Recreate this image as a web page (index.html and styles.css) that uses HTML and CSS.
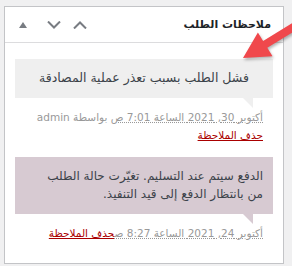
FILE: index.html
```html
<!DOCTYPE html>
<html lang="ar" dir="rtl">
<head>
  <meta charset="UTF-8">
  <title>ملاحظات الطلب</title>
  <link rel="stylesheet" href="styles.css">
</head>
<body>
  <div class="postbox">
    <div class="postbox-header">
      <h2>ملاحظات الطلب</h2>
      <div class="handle-actions">
        <button class="handle-btn" aria-label="نقل لأعلى">
          <svg width="14" height="8" viewBox="0 0 14 8"><polyline points="1,7.5 7,1.5 13,7.5" /></svg>
        </button>
        <button class="handle-btn" aria-label="نقل لأسفل">
          <svg width="14" height="8" viewBox="0 0 14 8"><polyline points="1,0.5 7,6.5 13,0.5" /></svg>
        </button>
        <button class="handle-btn toggle" aria-label="تبديل">
          <svg width="8" height="6" viewBox="0 0 8 6"><polygon points="0,6 4,0 8,6" /></svg>
        </button>
      </div>
    </div>

    <ul class="order-notes">
      <li class="note system-note">
        <div class="note-content">
          <p class="centered">فشل الطلب بسبب تعذر عملية المصادقة</p>
        </div>
        <p class="meta">
          <abbr class="exact-date">أكتوبر 30, 2021 الساعة 7:01 ص</abbr> بواسطة admin
          <br><a href="#" class="delete-note">حذف الملاحظة</a>
        </p>
      </li>
      <li class="note customer-note">
        <div class="note-content">
          <p>الدفع سيتم عند التسليم. تغيّرت حالة الطلب<br>من بانتظار الدفع إلى قيد التنفيذ.</p>
        </div>
        <p class="meta">
          <abbr class="exact-date">أكتوبر 24, 2021 الساعة 8:27 ص</abbr><a href="#" class="delete-note">حذف الملاحظة</a>
        </p>
      </li>
    </ul>
  </div>

  <!-- red pointer arrow drawn over the panel -->
  <svg class="pointer" width="56" height="44" viewBox="0 0 56 44">
    <polygon points="7,36 36.5,34.3 31.3,25.8 68.7,2.9 64.5,-3.9 27.1,19 21.9,10.5" />
  </svg>
</body>
</html>
```

FILE: styles.css
```css
/* Page */
html {
  box-sizing: border-box;
}
*, *:before, *:after {
  box-sizing: inherit;
}
body {
  margin: 0;
  padding: 6px 8px 0 4px;
  background-color: #f0f0f1;
  font-family: "DejaVu Sans", "Noto Sans", sans-serif;
  color: #3c434a;
}

/* Panel */
.postbox {
  width: 280px;
  height: 258px;
  background-color: #fff;
  border: 1px solid #c3c4c7;
  overflow: hidden;
}
.postbox-header {
  display: flex;
  align-items: center;
  justify-content: space-between;
  height: 36px;
  padding-right: 12px;
  border-bottom: 1px solid #dcdcde;
}
.postbox-header h2 {
  margin: 0;
  font-size: 11px;
  font-weight: 600;
  color: #1d2327;
}

/* Header buttons */
.handle-actions {
  display: flex;
  height: 100%;
}
.handle-btn {
  display: flex;
  align-items: center;
  justify-content: center;
  width: 26px;
  height: 100%;
  padding: 0;
  margin: 0;
  border: 0;
  background: none;
}
.handle-btn.toggle {
  width: 36px;
}
.handle-btn polyline {
  fill: none;
  stroke: #787c82;
  stroke-width: 2;
}
.handle-btn polygon {
  fill: #787c82;
}

/* Notes */
.order-notes {
  list-style: none;
  margin: 0;
  padding: 16px 10px 0;
}
.note {
  margin-bottom: 13px;
}
.note-content {
  position: relative;
  padding: 10px;
  background-color: #efefef;
  font-size: 12px;
  line-height: 18.5px;
}
.note-content::after {
  content: "";
  position: absolute;
  bottom: -10px;
  right: 20px;
  width: 0;
  height: 0;
  border-style: solid;
  border-width: 10px 0 0 10px;
  border-color: #efefef transparent;
}
.note-content p {
  margin: 0;
}
.note-content p.centered {
  text-align: center;
  font-size: 12.5px;
}
.customer-note .note-content {
  background-color: #d7cad2;
}
.customer-note .note-content::after {
  border-color: #d7cad2 transparent;
}

.meta {
  margin: 0;
  padding: 10px 10px 0;
  font-size: 10.5px;
  line-height: 18px;
  color: #999;
}
.exact-date {
  text-decoration: underline dotted;
}
.delete-note {
  color: #a00;
  text-decoration: underline;
}

/* Red pointer */
.pointer {
  position: absolute;
  left: 236px;
  top: 22px;
  overflow: visible;
  filter: drop-shadow(1px 2px 1.5px rgba(0, 0, 0, 0.3));
}
.pointer polygon {
  fill: #f0484c;
}
```
